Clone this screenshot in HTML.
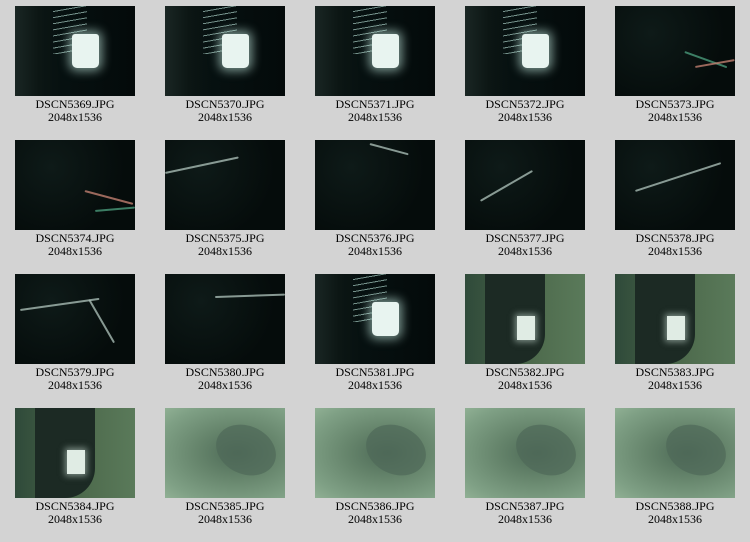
<!DOCTYPE html>
<html><head><meta charset="utf-8"><style>
body{margin:0;background:#d3d3d3;width:750px;height:542px;overflow:hidden;position:relative;font-family:"Liberation Serif",serif;}
.c{position:absolute;width:150px;text-align:center;font-size:12px;line-height:13px;color:#000;}
.t{position:relative;width:120px;height:90px;margin:0 auto 2px;overflow:hidden;background:#071210;}
.cup .t{background:linear-gradient(90deg,#1a2624 0,#0c1614 20%,#061010 40%,#040a0a 100%);}
.cup .t:before{content:"";position:absolute;left:38px;top:0;width:34px;height:48px;background:repeating-linear-gradient(170deg,transparent 0 5px,#8fb0a8 5px 6px);opacity:.8}
.cup .t:after{content:"";position:absolute;left:57px;top:28px;width:27px;height:34px;background:#e8f4f0;border-radius:3px 3px 5px 5px;box-shadow:0 0 10px 3px rgba(200,240,230,.6)}
.sp .t{background:radial-gradient(circle at 30% 30%,#0e1a18,#050c0b 70%);}
.sp .t i{position:absolute;height:2px;background:#a8bcb4;border-radius:2px;transform-origin:0 0;opacity:.8}
.gr .t{background:linear-gradient(90deg,#2f4a3a 0,#3f5a42 30%,#4f6c4e 60%,#5a7a5a 100%);}
.gr .t:before{content:"";position:absolute;left:20px;top:0;width:60px;height:90px;background:#1c2a24;border-radius:0 0 30px 0}
.gr .t:after{content:"";position:absolute;left:52px;top:42px;width:18px;height:24px;background:#e0ece4;box-shadow:0 0 6px 2px rgba(220,240,230,.5)}
.fog .t{background:radial-gradient(ellipse at 60% 50%,#4d6a56 0,#66856c 40%,#7fa085 80%,#90b094 100%);}
.fog .t:before{content:"";position:absolute;left:50px;top:18px;width:62px;height:48px;background:#4f6858;border-radius:50%;transform:rotate(25deg);opacity:.7}
</style></head><body>

<div class="c cup" style="left:0;top:6px"><div class="t"></div>DSCN5369.JPG<br>2048x1536</div>
<div class="c cup" style="left:150px;top:6px"><div class="t"></div>DSCN5370.JPG<br>2048x1536</div>
<div class="c cup" style="left:300px;top:6px"><div class="t"></div>DSCN5371.JPG<br>2048x1536</div>
<div class="c cup" style="left:450px;top:6px"><div class="t"></div>DSCN5372.JPG<br>2048x1536</div>
<div class="c sp" style="left:600px;top:6px"><div class="t"><i style="left:70px;top:45px;width:45px;transform:rotate(20deg);background:#4a9a7a"></i><i style="left:80px;top:60px;width:40px;transform:rotate(-10deg);background:#c08070"></i></div>DSCN5373.JPG<br>2048x1536</div>

<div class="c sp" style="left:0;top:140px"><div class="t"><i style="left:70px;top:50px;width:50px;transform:rotate(15deg);background:#c08070"></i><i style="left:80px;top:70px;width:40px;transform:rotate(-5deg);background:#4a9a7a"></i></div>DSCN5374.JPG<br>2048x1536</div>
<div class="c sp" style="left:150px;top:140px"><div class="t"><i style="left:0;top:32px;width:75px;transform:rotate(-12deg)"></i></div>DSCN5375.JPG<br>2048x1536</div>
<div class="c sp" style="left:300px;top:140px"><div class="t"><i style="left:55px;top:3px;width:40px;transform:rotate(15deg)"></i></div>DSCN5376.JPG<br>2048x1536</div>
<div class="c sp" style="left:450px;top:140px"><div class="t"><i style="left:15px;top:60px;width:60px;transform:rotate(-30deg)"></i></div>DSCN5377.JPG<br>2048x1536</div>
<div class="c sp" style="left:600px;top:140px"><div class="t"><i style="left:20px;top:50px;width:90px;transform:rotate(-18deg)"></i></div>DSCN5378.JPG<br>2048x1536</div>

<div class="c sp" style="left:0;top:274px"><div class="t"><i style="left:5px;top:35px;width:80px;transform:rotate(-8deg)"></i><i style="left:75px;top:25px;width:50px;transform:rotate(60deg)"></i></div>DSCN5379.JPG<br>2048x1536</div>
<div class="c sp" style="left:150px;top:274px"><div class="t"><i style="left:50px;top:22px;width:70px;transform:rotate(-2deg)"></i></div>DSCN5380.JPG<br>2048x1536</div>
<div class="c cup" style="left:300px;top:274px"><div class="t"></div>DSCN5381.JPG<br>2048x1536</div>
<div class="c gr" style="left:450px;top:274px"><div class="t"></div>DSCN5382.JPG<br>2048x1536</div>
<div class="c gr" style="left:600px;top:274px"><div class="t"></div>DSCN5383.JPG<br>2048x1536</div>

<div class="c gr" style="left:0;top:408px"><div class="t"></div>DSCN5384.JPG<br>2048x1536</div>
<div class="c fog" style="left:150px;top:408px"><div class="t"></div>DSCN5385.JPG<br>2048x1536</div>
<div class="c fog" style="left:300px;top:408px"><div class="t"></div>DSCN5386.JPG<br>2048x1536</div>
<div class="c fog" style="left:450px;top:408px"><div class="t"></div>DSCN5387.JPG<br>2048x1536</div>
<div class="c fog" style="left:600px;top:408px"><div class="t"></div>DSCN5388.JPG<br>2048x1536</div>

</body></html>
